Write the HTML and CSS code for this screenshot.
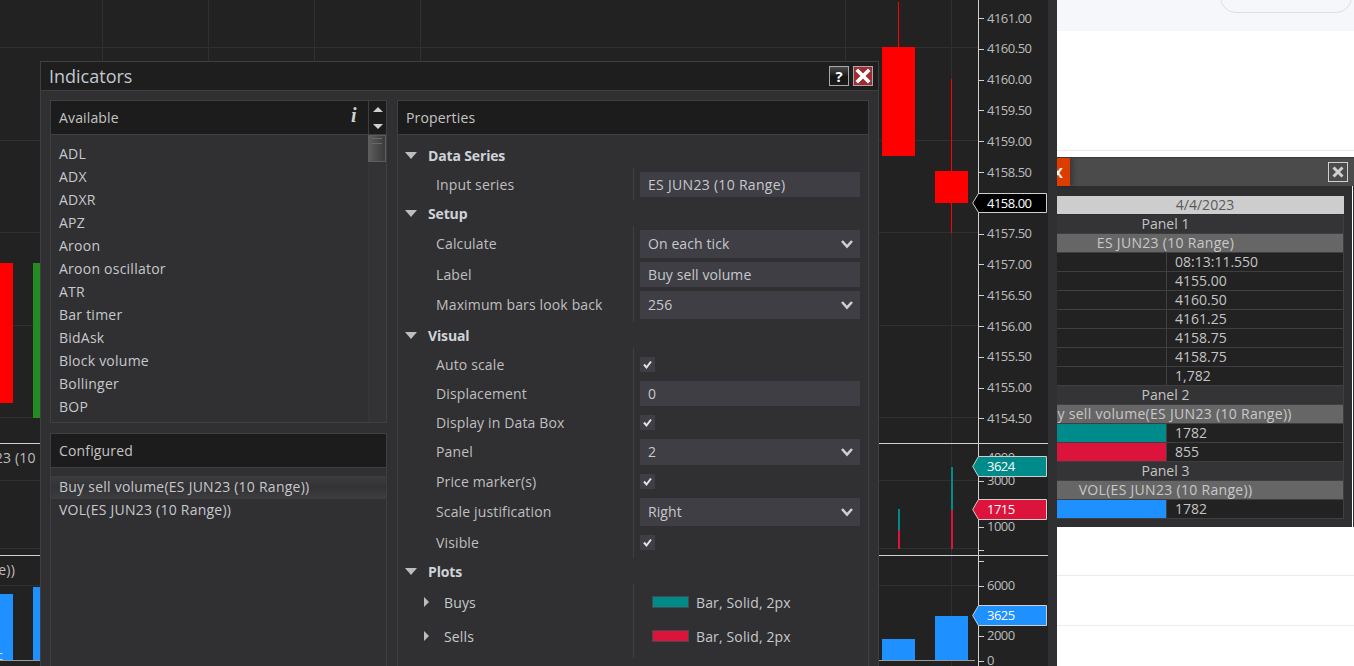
FILE: index.html
```html
<!DOCTYPE html>
<html lang="en">
<head>
<meta charset="utf-8">
<title>Indicators</title>
<link rel="stylesheet" href="styles.css">
</head>
<body>
<div class="desk">
  <div class="web-top"><div class="web-pill"></div></div>
  <div class="web-rule rule-a"></div>
  <div class="web-rule rule-b"></div>
  <div class="web-rule rule-c"></div>

  <section class="chart">
    <svg class="chart-art" width="1048" height="666" viewBox="0 0 1048 666">
      <g stroke="#303032" stroke-width="1">
        <path d="M102.5 0V666M208.5 0V666M314.5 0V666M420.5 0V666M845.5 0V443M951.5 0V666"/>
        <path d="M0 47.5H978M0 140.5H978M0 232.5H978M0 325.5H978M0 417.5H978M0 480.5H978M0 548.5H978M0 585.5H978"/>
      </g>
      <g fill="#ff0000">
        <rect x="0" y="263" width="13" height="140"/>
        <rect x="882" y="47" width="33" height="109"/>
        <rect x="898" y="2" width="1" height="45"/>
        <rect x="935" y="171" width="33" height="32"/>
        <rect x="951" y="79" width="1" height="154"/>
      </g>
      <rect x="33" y="263" width="8" height="155" fill="#228b22"/>
      <rect x="898" y="509" width="2" height="21" fill="#008b8b"/>
      <rect x="898" y="530" width="2" height="19" fill="#dc143c"/>
      <rect x="951" y="467" width="2" height="43" fill="#008b8b"/>
      <rect x="951" y="510" width="2" height="39" fill="#dc143c"/>
      <g fill="#1e90ff">
        <rect x="0" y="594" width="13" height="67"/>
        <rect x="33" y="587" width="8" height="74"/>
        <rect x="882" y="639" width="33" height="22"/>
        <rect x="935" y="616" width="33" height="45"/>
      </g>
      <path d="M0 660.5H975" stroke="#9a9a9a" stroke-width="1"/>
      <path d="M0 443.5H1048M0 555.5H1048" stroke="#d0d0d0" stroke-width="1"/>
      <path d="M978.5 0V666" stroke="#cfcfcf" stroke-width="1"/>
    </svg>

    <div class="series-label label-price">ES JUN23 (10 Range)</div>
    <div class="series-label label-vol">VOL(ES JUN23 (10 Range))</div>
    <div class="bar-note">c</div>

    <div class="scale scale-price">
      <div class="tick">4161.00</div><div class="tick">4160.50</div><div class="tick">4160.00</div><div class="tick">4159.50</div>
      <div class="tick">4159.00</div><div class="tick">4158.50</div><div class="tick">4158.00</div><div class="tick">4157.50</div>
      <div class="tick">4157.00</div><div class="tick">4156.50</div><div class="tick">4156.00</div><div class="tick">4155.50</div>
      <div class="tick">4155.00</div><div class="tick">4154.50</div>
    </div>
    <div class="scale scale-buy">
      <div class="tick">4000</div><div class="tick">3000</div><div class="tick">2000</div><div class="tick">1000</div><div class="tick"></div>
    </div>
    <div class="scale scale-vol">
      <div class="tick"></div><div class="tick">6000</div><div class="tick">4000</div><div class="tick">2000</div><div class="tick">0</div>
    </div>

    <div class="marker mk-last"><svg class="mk-shape" width="75" height="20" viewBox="0 0 75 20"><polygon points="74.5,0.5 6.5,0.5 0.7,10 6.5,19.5 74.5,19.5"/></svg><span class="mk-text">4158.00</span></div>
    <div class="marker mk-buy"><svg class="mk-shape" width="75" height="21" viewBox="0 0 75 21"><polygon points="74.5,0.5 6.5,0.5 0.7,10.5 6.5,20.5 74.5,20.5"/></svg><span class="mk-text">3624</span></div>
    <div class="marker mk-sell"><svg class="mk-shape" width="75" height="21" viewBox="0 0 75 21"><polygon points="74.5,0.5 6.5,0.5 0.7,10.5 6.5,20.5 74.5,20.5"/></svg><span class="mk-text">1715</span></div>
    <div class="marker mk-vol"><svg class="mk-shape" width="75" height="21" viewBox="0 0 75 21"><polygon points="74.5,0.5 6.5,0.5 0.7,10.5 6.5,20.5 74.5,20.5"/></svg><span class="mk-text">3625</span></div>
  </section>

  <section class="dialog">
    <header class="dlg-title">
      <h1 class="dlg-name">Indicators</h1>
      <div class="dlg-btns">
        <button class="dlg-btn btn-help">?</button>
        <button class="dlg-btn btn-close"><svg width="16" height="16" viewBox="0 0 16 16"><path d="M3 3L13 13M13 3L3 13" stroke="#fff" stroke-width="3.6" stroke-linecap="square"/></svg></button>
      </div>
    </header>
    <div class="dlg-body">
      <div class="dlg-left">
        <div class="panel panel-available">
          <div class="panel-head head-split">
            <span class="head-label">Available</span>
            <span class="info">i</span>
            <span class="spin">
              <svg width="12" height="26" viewBox="0 0 12 26"><path d="M6 2L11 7H1Z M6 24L1 19H11Z" fill="#d0d0d0"/></svg>
            </span>
          </div>
          <div class="avail-body">
            <ul class="list">
              <li>ADL</li><li>ADX</li><li>ADXR</li><li>APZ</li><li>Aroon</li><li>Aroon oscillator</li>
              <li>ATR</li><li>Bar timer</li><li>BidAsk</li><li>Block volume</li><li>Bollinger</li><li>BOP</li>
            </ul>
            <div class="scroll"><div class="thumb"></div></div>
          </div>
        </div>
        <div class="panel panel-configured">
          <div class="panel-head"><span class="head-label">Configured</span></div>
          <ul class="list list-conf">
            <li class="selected">Buy sell volume(ES JUN23 (10 Range))</li>
            <li>VOL(ES JUN23 (10 Range))</li>
          </ul>
        </div>
      </div>

      <div class="panel panel-props">
        <div class="panel-head"><span class="head-label">Properties</span></div>
        <div class="props">
          <div class="sec-head"><span class="tri-down"></span>Data Series</div>
          <div class="group">
            <div class="row h25"><span class="key">Input series</span><span class="val">ES JUN23 (10 Range)</span></div>
          </div>
          <div class="sec-head"><span class="tri-down"></span>Setup</div>
          <div class="group">
            <div class="row h28"><span class="key">Calculate</span><span class="val sel">On each tick<svg class="chev" width="14" height="10" viewBox="0 0 14 10"><path d="M2 2L7 7.5L12 2" fill="none" stroke="#cfcfcf" stroke-width="2.6"/></svg></span></div>
            <div class="row h25"><span class="key">Label</span><span class="val val-raised">Buy sell volume</span></div>
            <div class="row h28"><span class="key">Maximum bars look back</span><span class="val sel">256<svg class="chev" width="14" height="10" viewBox="0 0 14 10"><path d="M2 2L7 7.5L12 2" fill="none" stroke="#cfcfcf" stroke-width="2.6"/></svg></span></div>
          </div>
          <div class="sec-head"><span class="tri-down"></span>Visual</div>
          <div class="group">
            <div class="row h25"><span class="key">Auto scale</span><span class="check"><svg width="15" height="15" viewBox="0 0 15 15"><path d="M4 7.5L6.5 10.5L11 4.5" fill="none" stroke="#e4e4e4" stroke-width="2"/></svg></span></div>
            <div class="row h25"><span class="key">Displacement</span><span class="val">0</span></div>
            <div class="row h25"><span class="key">Display in Data Box</span><span class="check"><svg width="15" height="15" viewBox="0 0 15 15"><path d="M4 7.5L6.5 10.5L11 4.5" fill="none" stroke="#e4e4e4" stroke-width="2"/></svg></span></div>
            <div class="row h26"><span class="key">Panel</span><span class="val sel">2<svg class="chev" width="14" height="10" viewBox="0 0 14 10"><path d="M2 2L7 7.5L12 2" fill="none" stroke="#cfcfcf" stroke-width="2.6"/></svg></span></div>
            <div class="row h25"><span class="key">Price marker(s)</span><span class="check"><svg width="15" height="15" viewBox="0 0 15 15"><path d="M4 7.5L6.5 10.5L11 4.5" fill="none" stroke="#e4e4e4" stroke-width="2"/></svg></span></div>
            <div class="row h28"><span class="key">Scale justification</span><span class="val sel">Right<svg class="chev" width="14" height="10" viewBox="0 0 14 10"><path d="M2 2L7 7.5L12 2" fill="none" stroke="#cfcfcf" stroke-width="2.6"/></svg></span></div>
            <div class="row h25"><span class="key">Visible</span><span class="check"><svg width="15" height="15" viewBox="0 0 15 15"><path d="M4 7.5L6.5 10.5L11 4.5" fill="none" stroke="#e4e4e4" stroke-width="2"/></svg></span></div>
          </div>
          <div class="sec-head"><span class="tri-down"></span>Plots</div>
          <div class="group group-plots">
            <div class="row plot"><span class="key key-plot"><span class="tri-right"></span>Buys</span><span class="plot-val"><span class="swatch sw-teal"></span>Bar, Solid, 2px</span></div>
            <div class="row plot"><span class="key key-plot"><span class="tri-right"></span>Sells</span><span class="plot-val"><span class="swatch sw-red"></span>Bar, Solid, 2px</span></div>
          </div>
        </div>
      </div>
    </div>
  </section>

  <section class="databox">
    <header class="box-title">
      <span class="box-tab">x</span>
      <button class="box-close"><svg width="14" height="14" viewBox="0 0 14 14"><path d="M2.5 2.5L11.5 11.5M11.5 2.5L2.5 11.5" stroke="#cfcfcf" stroke-width="3"/></svg></button>
    </header>
    <div class="box-body">
      <div class="grid-table">
        <div class="cell span date">4/4/2023</div>
        <div class="cell span panel-row">Panel 1</div>
        <div class="cell span series">ES JUN23 (10 Range)</div>
        <div class="cell"></div><div class="cell v">08:13:11.550</div>
        <div class="cell"></div><div class="cell v">4155.00</div>
        <div class="cell"></div><div class="cell v">4160.50</div>
        <div class="cell"></div><div class="cell v">4161.25</div>
        <div class="cell"></div><div class="cell v">4158.75</div>
        <div class="cell"></div><div class="cell v">4158.75</div>
        <div class="cell"></div><div class="cell v">1,782</div>
        <div class="cell span panel-row">Panel 2</div>
        <div class="cell span series">Buy sell volume(ES JUN23 (10 Range))</div>
        <div class="cell teal"></div><div class="cell v">1782</div>
        <div class="cell crimson"></div><div class="cell v">855</div>
        <div class="cell span panel-row">Panel 3</div>
        <div class="cell span series">VOL(ES JUN23 (10 Range))</div>
        <div class="cell blue"></div><div class="cell v">1782</div>
      </div>
    </div>
  </section>
</div>
</body>
</html>
```
FILE: styles.css
```css
* { box-sizing: border-box; }
html, body { margin: 0; padding: 0; height: 100%; background: #fff; overflow: hidden; }
body { font-family: "Open Sans", "Liberation Sans", sans-serif; font-size: 14px; color: #c8c8c8; }
ul { list-style: none; margin: 0; padding: 0; }
h1 { margin: 0; font-weight: 400; }
button { margin: 0; padding: 0; font-family: inherit; }
svg { display: block; }

.desk { position: relative; width: 1354px; height: 666px; overflow: hidden; background: #fff; }

/* web page behind the windows */
.web-top { position: absolute; left: 1057px; top: 0; right: 0; height: 31px; background: #f5f7fb; }
.web-pill { position: absolute; left: 163px; top: -20px; width: 132px; height: 33px; border: 1px solid #dcdee3; border-radius: 16px; }
.web-rule { position: absolute; left: 1057px; right: 0; height: 1px; background: #ececec; }
.rule-a { top: 150px; background: #e8ecec; }
.rule-b { top: 575px; }
.rule-c { top: 625px; }

/* chart window */
.chart { position: absolute; left: 0; top: 0; width: 1057px; height: 666px; background: #222223; border-right: 9px solid #303033; }
.chart-art { position: absolute; left: 0; top: 0; }
.series-label { position: absolute; white-space: nowrap; color: #bdbdbd; line-height: 20px; letter-spacing: .2px; }
.label-price { left: -50px; top: 448px; }
.label-vol { right: 1033px; top: 560px; }
.bar-note { position: absolute; left: -3px; top: 647px; color: #cfe6ff; font-size: 12px; }

.scale { position: absolute; left: 979px; display: flex; flex-direction: column; color: #bcbcbc; font-size: 13px; letter-spacing: -.5px; }
.tick { position: relative; padding-left: 8px; white-space: nowrap; }
.tick::before { content: ""; position: absolute; left: 0; top: 50%; width: 5px; height: 1px; background: #cfcfcf; }
.scale-price { top: 2.6px; }
.scale-price .tick { height: 30.8px; line-height: 30.8px; }
.scale-buy { top: 446px; }
.scale-buy .tick { height: 23px; line-height: 23px; }
.scale-vol { top: 548px; }
.scale-vol .tick { height: 25px; line-height: 25px; }

.marker { position: absolute; left: 972px; width: 75px; }
.mk-shape { position: absolute; left: 0; top: 0; }
.mk-shape polygon { stroke: #cfcfcf; stroke-width: 1; }
.mk-text { position: relative; display: block; padding-left: 15px; color: #fff; line-height: 20px; font-size: 13px; letter-spacing: -.5px; }
.mk-last { top: 193px; height: 20px; }
.mk-last polygon { fill: #000; }
.mk-buy { top: 456px; height: 21px; }
.mk-buy polygon { fill: #008b8b; }
.mk-sell { top: 499px; height: 21px; }
.mk-sell polygon { fill: #dc143c; }
.mk-vol { top: 605px; height: 21px; }
.mk-vol polygon { fill: #1e90ff; }

/* indicators dialog */
.dialog { position: absolute; left: 40px; top: 61px; width: 839px; height: 640px; background: #303033; border: 1px solid #3f3f41; }
.dlg-title { height: 29px; display: flex; align-items: center; justify-content: space-between; padding: 0 5px 0 8px; background: #1e1e1f; border-bottom: 1px solid #3f3f41; }
.dlg-name { font-size: 18px; line-height: 28px; color: #c2c8ce; }
.dlg-btns { display: flex; gap: 4px; }
.dlg-btn { width: 20px; height: 20px; border: 1px solid #a8a8a8; display: flex; align-items: center; justify-content: center; }
.btn-help { background: linear-gradient(#4a4a4a, #151515 55%, #1c1c1c); color: #fff; font-weight: 700; font-size: 15px; line-height: 18px; }
.btn-close { background: #a12b33; }
.dlg-body { display: flex; gap: 10px; padding: 9px; }
.dlg-left { width: 337px; display: flex; flex-direction: column; gap: 10px; }

.panel { border: 1px solid #3f3f41; }
.panel-available { height: 323px; display: flex; flex-direction: column; }
.panel-configured { height: 300px; }
.panel-props { width: 472px; height: 600px; }
.panel-head { height: 34px; background: #1c1c1d; border-bottom: 1px solid #3f3f41; display: flex; align-items: center; padding-left: 8px; color: #c4c4c4; }
.head-label { flex: 1; line-height: 33px; letter-spacing: .15px; }
.head-split { padding-right: 0; }
.info { width: 17px; font-family: "Liberation Serif", serif; font-style: italic; font-weight: 700; font-size: 20px; line-height: 24px; color: #d0d0d0; margin-top: -6px; }
.spin { width: 18px; height: 33px; border-left: 1px solid #3f3f41; display: flex; align-items: center; justify-content: center; }

.avail-body { flex: 1; display: flex; min-height: 0; }
.list { flex: 1; padding-top: 7px; }
.list li { height: 23px; line-height: 23px; padding-left: 8px; white-space: nowrap; color: #c6c8cc; letter-spacing: .24px; }
.list-conf { padding-top: 8px; }
.list-conf li { line-height: 22px; }
.list-conf .selected { background: linear-gradient(#3c3c3e, #333335 50%, #3e3e40); }
.scroll { width: 18px; background: #333336; border-left: 1px solid #363639; }
.thumb { height: 27px; border: 1px solid #5c5c5c; margin-left: -1px;
  background:
    linear-gradient(#6a6a6a, #6a6a6a) 3px 2px / 10px 1px no-repeat,
    linear-gradient(#6a6a6a, #6a6a6a) 3px 7px / 10px 1px no-repeat,
    linear-gradient(90deg, #5e5e5e, #4a4a4a 50%, #3b3b3d); }

.props { padding-top: 9px; }
.sec-head { height: 22px; line-height: 22px; padding-top: 2px; display: flex; align-items: center; font-weight: 700; color: #cfd3d8; padding-left: 7px; letter-spacing: -.15px; }
.tri-down { width: 0; height: 0; border-left: 6px solid transparent; border-right: 6px solid transparent; border-top: 7px solid #bdbdbd; margin-right: 11px; margin-top: -2px; }
.group { display: flex; flex-direction: column; gap: 4px; padding: 6px 0 5px; background: linear-gradient(#3f3f41, #3f3f41) 235px 2px / 1px calc(100% - 4px) no-repeat; }
.group-plots { gap: 0; padding: 4px 0 6px; }
.row { display: grid; grid-template-columns: 242px 220px; align-items: center; }
.h25 { height: 25px; }
.h26 { height: 26px; }
.h28 { height: 28px; }
.h26 .key, .h28 .key, .h26 .val, .h28 .val { padding-bottom: 2px; }
.h26 .chev, .h28 .chev { margin-top: 2px; }
.val-raised { padding-bottom: 3px; }
.plot { height: 34px; padding-bottom: 2px; }
.key { padding-left: 38px; white-space: nowrap; color: #bfbfbf; letter-spacing: .14px; }
.val { display: flex; align-items: center; justify-content: space-between; height: 100%; background: #3e3e44; padding: 0 6px 0 8px; color: #c6c8cc; letter-spacing: .3px; }
.sel, .val-raised { letter-spacing: .1px; }
.check { width: 15px; height: 15px; background: #3e3e44; }
.key-plot { display: flex; align-items: center; padding-left: 26px; color: #c6c8cc; }
.tri-right { width: 0; height: 0; border-top: 5px solid transparent; border-bottom: 5px solid transparent; border-left: 5px solid #bdbdbd; margin-right: 15px; }
.plot-val { display: flex; align-items: center; padding-left: 12px; color: #c6c8cc; letter-spacing: .14px; }
.swatch { width: 37px; height: 12px; margin-right: 7px; border: 1px solid #474750; }
.sw-teal { background: #008b8b; }
.sw-red { background: #dc143c; }

/* data box window */
.databox { position: absolute; left: 1057px; top: 157px; width: 297px; height: 370px; background: #2f2f32; border-top: 1px solid #3a3a3a; overflow: hidden; }
.box-title { height: 28px; background: #4b4b4b; display: flex; align-items: center; justify-content: space-between; padding-right: 6px; }
.box-tab { width: 13px; height: 28px; background: #dd3c00; color: #fff; font-size: 18px; font-weight: 600; line-height: 26px; text-indent: -4px; box-shadow: 3px 0 5px rgba(0,0,0,.25); overflow: hidden; }
.box-close { width: 20px; height: 20px; border: 1px solid #cfcfcf; background: transparent; display: flex; align-items: center; justify-content: center; }
.box-body { height: 341px; padding-top: 10px; border-right: 1px solid #2f2f32; box-shadow: inset -1px 0 0 #fff; }
.grid-table { margin-left: -69px; width: 356px; display: grid; grid-template-columns: 178px 178px; grid-auto-rows: 19px; }
.cell { border-bottom: 1px solid #3f3f41; background: #222223; line-height: 18px; white-space: nowrap; color: #c4c4c4; }
.v { border-left: 1px solid #3f3f41; padding-left: 8px; border-right: 1px solid #3f3f41; }
.span { grid-column: 1 / 3; text-align: center; border-right: 1px solid #3f3f41; }
.date { background: #cdcdcd; color: #5a5a5a; padding-left: 78px; border-bottom-color: #2f2f32; border-right: 0; }
.panel-row { background: #343436; }
.series { background: #666; color: #c8c8c8; letter-spacing: .3px; }
.teal { background: #008b8b; }
.crimson { background: #dc143c; }
.blue { background: #1e90ff; }
```
